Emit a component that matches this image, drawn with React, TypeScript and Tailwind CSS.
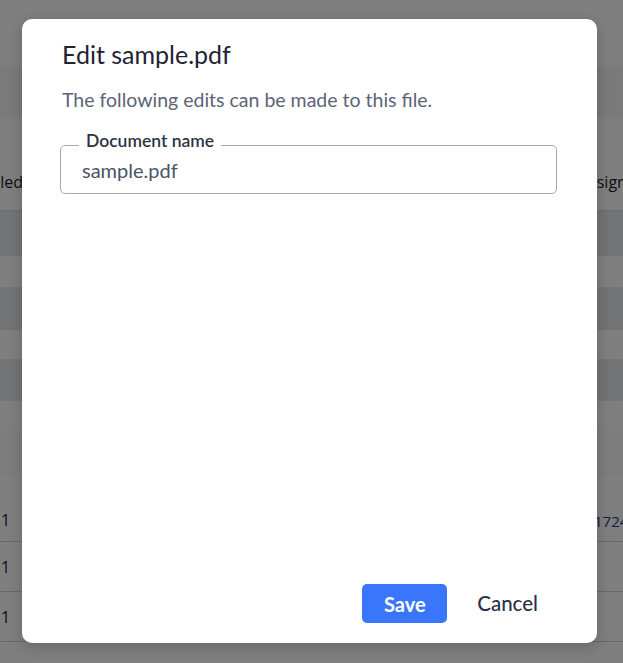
import React from 'react';

const font = { fontFamily: 'Lato, "Noto Sans", sans-serif' };

// Table rows sitting behind the dialog
const bands: { h: string; bg: string }[] = [
  { h: 'h-[45px]', bg: 'bg-[#e6e8ec]' },
  { h: 'h-[31px]', bg: 'bg-white' },
  { h: 'h-[43px]', bg: 'bg-[#e6e8ec]' },
  { h: 'h-[29px]', bg: 'bg-white' },
  { h: 'h-[42px]', bg: 'bg-[#e6e8ec]' },
  { h: 'h-[29px]', bg: 'bg-white' },
  { h: 'h-[45px]', bg: 'bg-[#fafafa]' },
];

function BackgroundPage() {
  return (
    <div className="flex h-[663px] w-full flex-col overflow-hidden bg-white text-[16px] text-[#1c1c1c] font-['Open_Sans',sans-serif]">
      <div className="h-[67px] shrink-0 bg-white" />
      <div className="h-[50px] shrink-0 bg-[#f4f4f4]" />
      <div className="flex h-[94px] shrink-0 items-end border-b border-[#d8d8d8] pb-[16px]">
        <div className="flex w-[23px] shrink-0 justify-end">
          <span className="whitespace-nowrap">Scheduled</span>
        </div>
        <span className="ml-auto mr-[-56px] w-[100px] whitespace-nowrap">Assigned to</span>
      </div>
      {bands.map((b, i) => (
        <div key={i} className={`${b.h} ${b.bg} shrink-0`} />
      ))}
      <div className="flex h-[67px] shrink-0 items-end border-b border-[#d4d4d4] pb-[9px]">
        <span className="pl-[1px]">1</span>
        <span className="ml-auto mr-[-31px] w-[60px] text-[15px] text-[#1e3a8a]">17245</span>
      </div>
      <div className="flex h-[50px] shrink-0 items-center border-b border-[#d4d4d4]">
        <span className="pl-[1px]">1</span>
      </div>
      <div className="flex h-[50px] shrink-0 items-center border-b border-[#d4d4d4]">
        <span className="pl-[1px]">1</span>
      </div>
    </div>
  );
}

function EditDialog() {
  return (
    <div
      style={font}
      className="flex h-[624px] w-[575px] flex-col rounded-[10px] bg-white px-10 pt-[19px] pb-5 shadow-[0_4px_16px_rgba(0,0,0,0.2)]"
    >
      <h2 className="text-[25px] leading-[32px] text-[#1f2433]">Edit sample.pdf</h2>
      <p className="mt-[16px] text-[19.5px] leading-[28px] text-[#5c6478]">
        The following edits can be made to this file.
      </p>

      <div className="relative mt-[31px] ml-[-2px] flex h-[49px] items-center rounded-[5px] border border-[#a6aab6] px-[21px]">
        <span className="absolute left-[18px] top-[-15px] bg-white px-[7px] text-[17.5px] font-semibold leading-[20px] text-[#2c3347]">
          Document name
        </span>
        <span className="text-[20px] leading-[24px] text-[#4b5366]">sample.pdf</span>
      </div>

      <div className="mt-auto flex items-center justify-end gap-[11px]">
        <button className="h-[39px] w-[85px] rounded-[5px] bg-[#3a76fb] text-[20px] font-bold text-white">
          Save
        </button>
        <button className="h-[39px] px-[19px] text-[20.5px] font-medium text-[#2b3147]">
          Cancel
        </button>
      </div>
    </div>
  );
}

export default function App() {
  return (
    <div className="relative h-[663px] w-full overflow-hidden">
      <BackgroundPage />
      <div className="absolute inset-0 bg-black/50" />
      <div className="absolute inset-0 flex items-start pl-[22px] pt-[19px]">
        <EditDialog />
      </div>
    </div>
  );
}
